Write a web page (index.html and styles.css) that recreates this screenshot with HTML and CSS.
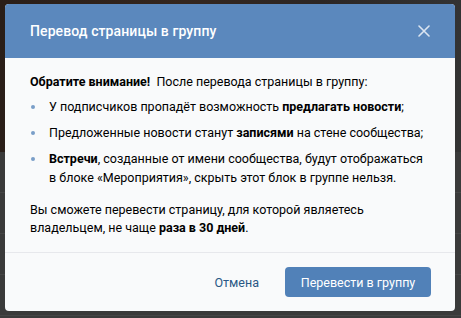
FILE: index.html
```html
<!DOCTYPE html>
<html lang="ru">
<head>
<meta charset="utf-8">
<link rel="stylesheet" href="styles.css">
</head>
<body>
<div class="backdrop">
  <div class="bg-photo"></div>
  <div class="bg-rows">
    <div class="bg-row"></div>
    <div class="bg-row"></div>
    <div class="bg-row"></div>
    <div class="bg-row"></div>
  </div>
</div>
<div class="modal">
  <div class="modal-header">
    <div class="modal-title">Перевод страницы в группу</div>
    <svg class="close" width="12" height="12" viewBox="0 0 12 12"><path d="M1 1L11 11M11 1L1 11" stroke="currentColor" stroke-width="1.6" stroke-linecap="round" fill="none"/></svg>
  </div>
  <div class="modal-body">
    <p class="lead"><b>Обратите внимание!</b>&nbsp; После перевода страницы в группу:</p>
    <ul class="list">
      <li>У подписчиков пропадёт возможность <b>предлагать новости</b>;</li>
      <li>Предложенные новости станут <b>записями</b> на стене сообщества;</li>
      <li><b>Встречи</b>, созданные от имени сообщества, будут отображаться в блоке «Мероприятия», скрыть этот блок в группе нельзя.</li>
    </ul>
    <p class="note">Вы сможете перевести страницу, для которой являетесь владельцем, не чаще <b>раза в 30 дней</b>.</p>
  </div>
  <div class="modal-footer">
    <button class="btn-flat">Отмена</button>
    <button class="btn-primary">Перевести в группу</button>
  </div>
</div>
</body>
</html>
```
FILE: styles.css
```css
html, body {
  margin: 0;
  padding: 0;
  width: 461px;
  height: 318px;
  overflow: hidden;
  font-family: Roboto, "Open Sans", Arial, sans-serif;
}
body {
  background: #3b3b3b;
  position: relative;
}
.backdrop {
  display: flex;
  flex-direction: column;
  height: 318px;
}
.bg-photo {
  height: 152px;
  background: linear-gradient(90deg, #2a1e18 0%, #34261e 40%, #2c2624 70%, #333 100%);
}
.bg-rows {
  display: flex;
  flex-direction: column;
}
.bg-row {
  height: 40px;
  border-bottom: 1px solid #454545;
  background: #3a3a3a;
}
.modal {
  position: absolute;
  left: 5px;
  top: 4px;
  width: 450px;
  height: 307px;
  border-radius: 4px;
  overflow: hidden;
  background: #f9fafb;
  display: flex;
  flex-direction: column;
}
.modal-header {
  height: 54px;
  background: #5b88bd;
  display: flex;
  align-items: center;
  justify-content: space-between;
  padding: 0 25px 0 25px;
  flex-shrink: 0;
}
.modal-title {
  color: #fff;
  font-size: 14px;
  font-weight: 500;
  letter-spacing: 0.1px;
}
.close {
  color: rgba(255, 255, 255, 0.78);
}
.modal-body {
  padding: 14px 25px 15px 25px;
  font-size: 12.5px;
  line-height: 19px;
  color: #000;
  border-bottom: 1px solid #e7e8ec;
}
.modal-body b {
  font-weight: 700;
}
.lead {
  margin: 0;
}
.list {
  list-style: none;
  margin: 6px 0 0 0;
  padding: 0;
}
.list li {
  position: relative;
  padding-left: 19px;
  margin-bottom: 7px;
}
.list li::before {
  content: "";
  position: absolute;
  left: 1px;
  top: 8px;
  width: 4px;
  height: 4px;
  border-radius: 50%;
  background: #7a9ec8;
}
.note {
  margin: 14px 0 0 0;
  line-height: 18px;
}
.modal-footer {
  flex: 1;
  display: flex;
  justify-content: flex-end;
  align-items: center;
  padding: 0 24px 0 25px;
  gap: 10px;
}
.btn-flat {
  border: 0;
  background: transparent;
  color: #2a5885;
  font-family: inherit;
  font-size: 12.5px;
  padding: 0 16px;
  height: 30px;
}
.btn-primary {
  border: 0;
  background: #5181b8;
  color: #fff;
  font-family: inherit;
  font-size: 12.5px;
  height: 30px;
  width: 146px;
  border-radius: 4px;
  padding: 0;
}
```
